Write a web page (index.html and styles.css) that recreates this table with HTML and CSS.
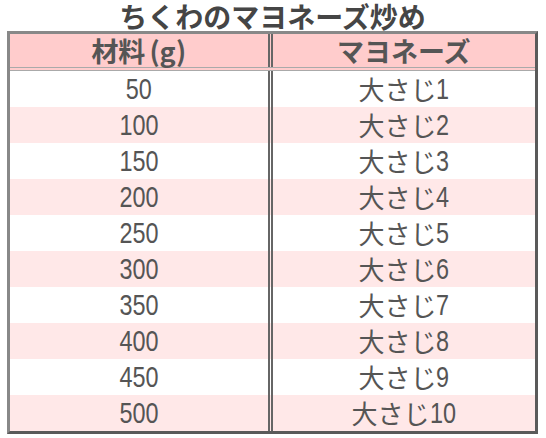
FILE: index.html
```html
<!DOCTYPE html>
<html lang="ja">
<head>
<meta charset="utf-8">
<link rel="stylesheet" href="styles.css">
</head>
<body>
<div class="wrap">
  <h1 class="title">ちくわのマヨネーズ炒め</h1>
  <div class="table">
    <div class="row head"><div class="cell">材料<span class="paren">(g)</span></div><div class="cell">マヨネーズ</div></div>
    <div class="row"><div class="cell"><span class="num">50</span></div><div class="cell">大さじ<span class="num">1</span></div></div>
    <div class="row alt"><div class="cell"><span class="num">100</span></div><div class="cell">大さじ<span class="num">2</span></div></div>
    <div class="row"><div class="cell"><span class="num">150</span></div><div class="cell">大さじ<span class="num">3</span></div></div>
    <div class="row alt"><div class="cell"><span class="num">200</span></div><div class="cell">大さじ<span class="num">4</span></div></div>
    <div class="row"><div class="cell"><span class="num">250</span></div><div class="cell">大さじ<span class="num">5</span></div></div>
    <div class="row alt"><div class="cell"><span class="num">300</span></div><div class="cell">大さじ<span class="num">6</span></div></div>
    <div class="row"><div class="cell"><span class="num">350</span></div><div class="cell">大さじ<span class="num">7</span></div></div>
    <div class="row alt"><div class="cell"><span class="num">400</span></div><div class="cell">大さじ<span class="num">8</span></div></div>
    <div class="row"><div class="cell"><span class="num">450</span></div><div class="cell">大さじ<span class="num">9</span></div></div>
    <div class="row alt"><div class="cell"><span class="num">500</span></div><div class="cell">大さじ<span class="num wide">10</span></div></div>
  </div>
</div>
</body>
</html>
```
FILE: styles.css
```css
html, body {
  margin: 0;
  padding: 0;
  background: #ffffff;
}
.wrap {
  padding-left: 7px;
  width: 531px;
}
.title {
  margin: 0;
  height: 31px;
  line-height: 32px;
  text-align: center;
  font-family: "Noto Sans CJK JP", sans-serif;
  font-weight: bold;
  font-size: 28px;
  color: #454545;
  white-space: nowrap;
}
.table {
  box-sizing: border-box;
  width: 531px;
  border: 3px solid;
  border-color: #888888 #5a5a5a #5a5a5a #888888;
  font-family: "Noto Sans CJK JP", sans-serif;
  color: #555555;
}
.row {
  display: grid;
  grid-template-columns: 1fr 1fr;
  height: 36px;
}
.row.alt {
  background: #ffe8e8;
}
.cell {
  display: flex;
  align-items: center;
  justify-content: center;
  font-size: 26px;
  line-height: 1;
}
.cell:first-child {
  border-right: 5px double #666666;
}
.num {
  display: inline-block;
  font-family: "Liberation Sans", sans-serif;
  font-size: 30px;
  line-height: 1;
  transform: scaleX(0.78);
  transform-origin: center;
}
.cell:last-child .num {
  transform-origin: left center;
  margin-right: -4px;
}
.cell:last-child .num.wide {
  margin-right: -7px;
}
.row.head {
  height: 37px;
  box-sizing: border-box;
  background: #ffcccc;
  border-bottom: 4px double #aaaaaa;
}
.row.head .cell {
  font-weight: bold;
  font-size: 27px;
  color: #555555;
}
.paren {
  margin-left: 4px;
}
```
